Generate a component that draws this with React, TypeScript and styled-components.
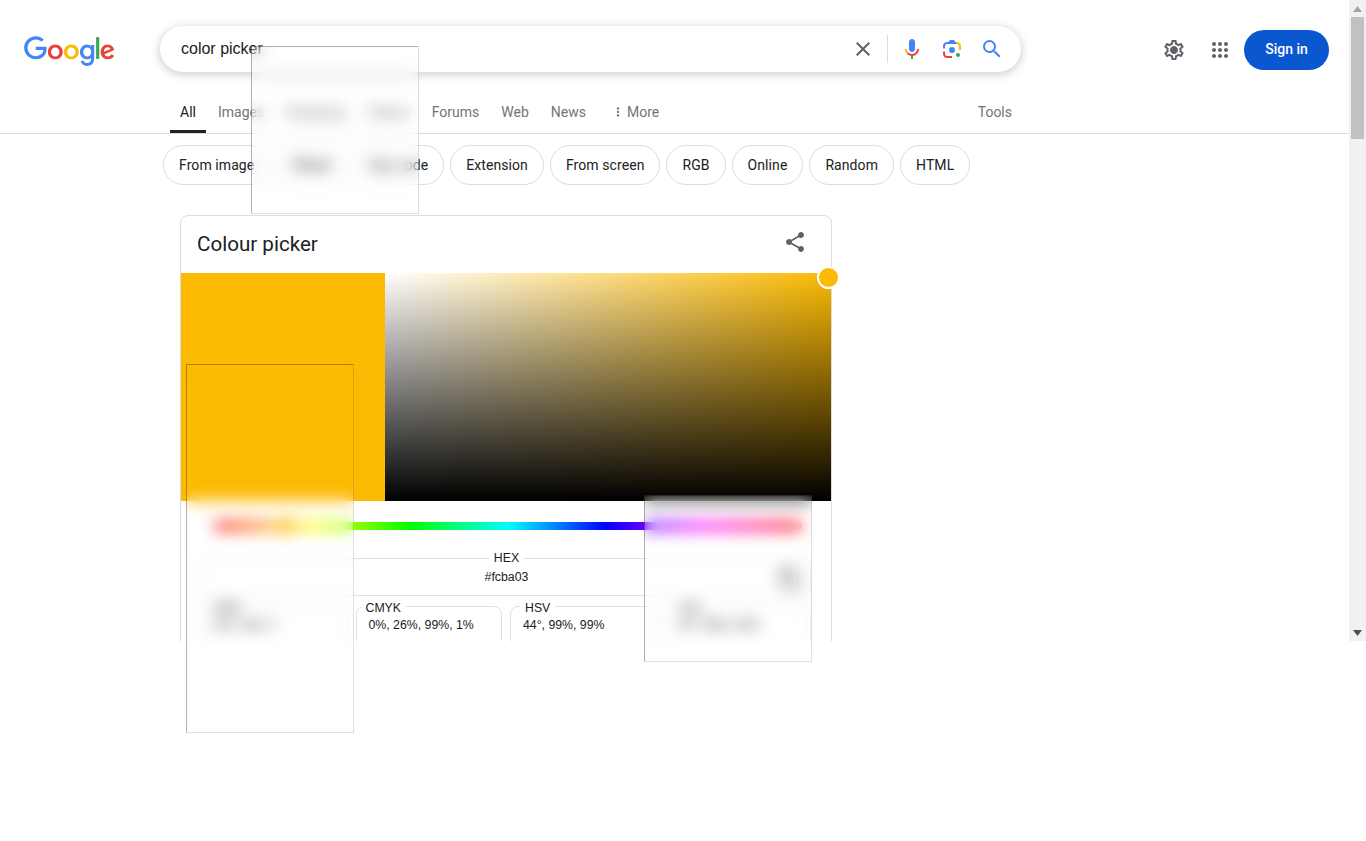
import React from "react";
import styled, { createGlobalStyle } from "styled-components";

const Global = createGlobalStyle`
  html, body { margin: 0; padding: 0; background: #fff; overflow: hidden; }
  body { font-family: "Liberation Sans", Arial, sans-serif; }
  * { box-sizing: border-box; }
`;

const sans = `Roboto, "Liberation Sans", Arial, sans-serif`;
const arial = `"Liberation Sans", Arial, sans-serif`;

const Root = styled.div`position: relative; width: 1366px; height: 841px; overflow: hidden; display: flex; align-items: flex-start;`;
const Page = styled.div`width: 1349px; height: 641px; overflow: hidden; flex: none;`;

const Header = styled.header`height: 92px; display: flex; align-items: flex-start;`;
const LogoWrap = styled.a`display: block; width: 91px; height: 31px; margin: 36px 0 0 24px; flex: none;`;
const SearchBar = styled.div`
  width: 861px; height: 46px; margin: 26px 0 0 45px; flex: none;
  border-radius: 23px; background: #fff; box-shadow: 0 2px 8px 1px rgba(64,60,67,.24);
  display: flex; align-items: center; padding: 0 17px 0 21px;
`;
const Query = styled.div`flex: 1; font: 16px ${arial}; color: #202124; margin-top: -1px;`;
const IconButton = styled.span<{ $w?: number }>`
  width: ${p => p.$w ?? 24}px; height: 24px; display: flex; align-items: center; justify-content: center; flex: none;
`;
const Divider = styled.span`width: 1px; height: 28px; background: #dadce0; margin: 0 12px 0 12px; flex: none;`;
const IconGap = styled.span<{ $w: number }>`width: ${p => p.$w}px; flex: none;`;
const Right = styled.div`display: flex; align-items: center; margin: 30px 0 0 auto; padding-right: 20px; height: 40px;`;
const SignIn = styled.a`
  width: 85px; height: 40px; border-radius: 20px; background: #0b57d0; color: #fff; padding-bottom: 2px;
  display: flex; align-items: center; justify-content: center; font: 500 14px ${sans}; margin-left: 12px;
`;

const TabBar = styled.nav`
  height: 42px; border-bottom: 1px solid #dadce0; padding-left: 170px; display: flex; align-items: stretch;
`;
const TabList = styled.div`width: 852px; display: flex; gap: 2px; align-items: stretch;`;
const Tab = styled.a<{ $active?: boolean; $end?: boolean; $offset?: number }>`
  padding: 0 10px 2px; display: flex; align-items: center; font: 14px ${sans}; height: 41px;
  color: ${p => (p.$active ? "#202124" : "#70757a")};
  margin-left: ${p => (p.$end ? "auto" : `${p.$offset ?? 0}px`)};
  ${p => p.$active && `box-shadow: inset 0 -3px 0 #202124;`}
`;
const Dots = styled.span`display: inline-flex; width: 14px; height: 14px; margin-right: 2px; color: #70757a;`;

const ChipRow = styled.div`display: flex; gap: 6px; padding: 11px 0 0 163px; height: 81px;`;
const Chip = styled.a`
  height: 40px; padding: 0 15px; border: 1px solid #dadce0; border-radius: 20px;
  display: flex; align-items: center; font: 14px ${sans}; letter-spacing: .08px; color: #202124; white-space: nowrap;
`;

const Card = styled.section`
  width: 652px; margin-left: 180px; border: 1px solid #dadce0; border-radius: 8px; height: 600px; position: relative;
`;
const CardHead = styled.div`height: 57px; display: flex; align-items: center; justify-content: space-between; padding: 0 24px 0 16px;`;
const CardTitle = styled.h2`margin: -2px 0 0; font: 400 20.6px ${sans}; color: #202124;`;
const ShareWrap = styled.span`width: 24px; height: 24px; margin-top: -5px; color: #5f6368;`;
const Picker = styled.div`display: flex; height: 228px; width: 100%;`;
const Swatch = styled.div`width: 204px; background: #fcba03; flex: none;`;
const Field = styled.div`
  flex: 1; background: linear-gradient(to top, #000, transparent), linear-gradient(to right, #fff, #fcba03);
`;
const Knob = styled.span<{ $size: number }>`
  position: absolute; width: ${p => p.$size}px; height: ${p => p.$size}px; border-radius: 50%;
  background: #fcba03; border: 2px solid #fff;
`;
const FieldKnob = styled(Knob)`left: 636px; top: 50px;`;
const HueWrap = styled.div`position: relative; margin: 21px 29px 0 33px; height: 8px;`;
const Hue = styled.div`
  height: 8px; border-radius: 4px;
  background: linear-gradient(to right, #f00, #ff0 16.66%, #0f0 33.33%, #0ff 50%, #00f 66.66%, #f0f 83.33%, #f00);
`;
const HueKnob = styled(Knob)`left: 62px; top: -6px;`;
const Outline = styled.fieldset`
  margin: 0; padding: 0; border: 1px solid #e0e0e0; min-width: 0;
`;
const HexLegend = styled.legend`
  font: 12.3px ${arial}; color: #202124; padding: 0 5px 0 5px; margin: 0 auto; line-height: 14px;
`;
const FormatLegend = styled.legend<{ $inset: number }>`
  font: 12.3px ${arial}; color: #202124; padding: 4px 5px 0; margin-left: ${p => p.$inset}px; line-height: 14px;
`;
const HexBox = styled(Outline)`
  margin: 21px 20px 0 21px; height: 45px; border-radius: 8px; text-align: center; position: relative;
`;
const HexValue = styled.div`font: 12.3px ${arial}; color: #202124; line-height: 14px; margin-top: 5px;`;
const CopyIcon = styled.span`position: absolute; right: 8px; top: 2px; width: 24px; height: 24px; color: #5f6368;`;
const FormatGrid = styled.div`
  display: grid; grid-template-columns: repeat(4, 146px); column-gap: 8.5px; margin: 1px 0 0 20px;
`;
const FormatBox = styled(Outline)`height: 62px; border-radius: 8px;`;
const FormatValue = styled.div<{ $inset: number }>`
  font: 12.3px ${arial}; color: #202124; line-height: 14px; padding-left: ${p => p.$inset}px; margin-top: 3px; white-space: nowrap;
`;

const Frost = styled.div`
  position: absolute; width: 168px; backdrop-filter: blur(8px);
  border: 1px solid; border-color: rgba(0,0,0,.3) rgba(0,0,0,.12) rgba(0,0,0,.12) rgba(0,0,0,.3);
`;
const FrostTabs = styled(Frost)`left: 251px; top: 46px; height: 168px;`;
const FrostLeft = styled(Frost)`left: 186px; top: 364px; height: 369px;`;
const FrostRight = styled(Frost)`left: 644px; top: 495px; height: 167px;`;

const Scrollbar = styled.div`
  width: 17px; height: 641px; background: #f1f1f1; flex: none; display: flex; flex-direction: column; align-items: center; justify-content: space-between;
`;
const ScrollTop = styled.div`display: flex; flex-direction: column; align-items: center; width: 100%;`;
const ArrowBox = styled.span`height: 17px; width: 100%; display: flex; align-items: center; justify-content: center;`;
const Thumb = styled.div`width: 13px; height: 122px; background: #c1c1c1;`;

const Icon = ({ d, color, size = 24 }: { d: string; color: string; size?: number }) => (
  <svg width={size} height={size} viewBox="0 0 24 24" fill={color}><path d={d} /></svg>
);

const GoogleLogo = () => (
  <svg width="91" height="31" viewBox="0 0 272 92">
    <path fill="#EA4335" d="M115.75 47.18c0 12.77-9.99 22.18-22.25 22.18s-22.25-9.41-22.25-22.18C71.25 34.32 81.24 25 93.5 25s22.25 9.32 22.25 22.18zm-9.74 0c0-7.98-5.79-13.44-12.51-13.44S80.99 39.2 80.99 47.18c0 7.9 5.79 13.44 12.51 13.44s12.51-5.55 12.51-13.44z" />
    <path fill="#FBBC05" d="M163.75 47.18c0 12.77-9.99 22.18-22.25 22.18s-22.25-9.41-22.25-22.18c0-12.85 9.99-22.18 22.25-22.18s22.25 9.32 22.25 22.18zm-9.74 0c0-7.98-5.79-13.44-12.51-13.44s-12.51 5.46-12.51 13.44c0 7.9 5.79 13.44 12.51 13.44s12.51-5.55 12.51-13.44z" />
    <path fill="#4285F4" d="M209.75 26.34v39.82c0 16.38-9.66 23.07-21.08 23.07-10.75 0-17.22-7.19-19.66-13.07l8.48-3.53c1.51 3.61 5.21 7.87 11.17 7.87 7.31 0 11.84-4.51 11.84-13v-3.19h-.34c-2.18 2.69-6.38 5.04-11.68 5.04-11.09 0-21.25-9.66-21.25-22.09 0-12.52 10.16-22.26 21.25-22.26 5.29 0 9.49 2.35 11.68 4.96h.34v-3.61h9.25zm-8.56 20.92c0-7.81-5.21-13.52-11.84-13.52-6.72 0-12.35 5.71-12.35 13.52 0 7.73 5.63 13.36 12.35 13.36 6.63 0 11.84-5.63 11.84-13.36z" />
    <path fill="#34A853" d="M225 3v65h-9.5V3h9.5z" />
    <path fill="#EA4335" d="M262.02 54.48l7.56 5.04c-2.44 3.61-8.32 9.83-18.48 9.83-12.6 0-22.01-9.74-22.01-22.18 0-13.19 9.49-22.18 20.92-22.18 11.51 0 17.14 9.16 18.98 14.11l1.01 2.52-29.65 12.28c2.27 4.45 5.8 6.72 10.75 6.72 4.96 0 8.4-2.44 10.92-6.14zm-23.27-7.98l19.82-8.23c-1.09-2.77-4.37-4.7-8.23-4.7-4.95 0-11.84 4.37-11.59 12.93z" />
    <path fill="#4285F4" d="M35.29 41.41V32H67c.31 1.64.47 3.58.47 5.68 0 7.06-1.93 15.79-8.15 22.01-6.05 6.3-13.78 9.66-24.02 9.66C16.32 69.35.36 53.89.36 34.91.36 15.93 16.32.47 35.3.47c10.5 0 17.98 4.12 23.6 9.49l-6.64 6.64c-4.03-3.78-9.49-6.72-16.97-6.72-13.86 0-24.7 11.17-24.7 25.03 0 13.86 10.84 25.03 24.7 25.03 8.99 0 14.11-3.61 17.39-6.89 2.66-2.66 4.41-6.46 5.1-11.65l-22.49.01z" />
  </svg>
);

const MicIcon = () => (
  <svg width="24" height="24" viewBox="0 0 24 24">
    <path fill="#4285f4" d="m12 15c1.66 0 3-1.31 3-2.97v-7.02c0-1.66-1.34-3.01-3-3.01s-3 1.34-3 3.01v7.02c0 1.66 1.34 2.97 3 2.97z" />
    <path fill="#34a853" d="m11 18.08h2v3.92h-2z" />
    <path fill="#fbbc04" d="m7.05 16.87c-1.27-1.33-2.05-2.83-2.05-4.87h2c0 1.45 0.56 2.42 1.47 3.38v0.32l-1.15 1.18z" />
    <path fill="#ea4335" d="m12 16.93a4.97 5.25 0 0 1 -3.54 -1.55l-1.41 1.49c1.26 1.34 3.02 2.13 4.95 2.13 3.87 0 6.99-2.92 6.99-7h-1.99c0 2.92-2.24 4.93-5 4.93z" />
  </svg>
);

const LensIcon = () => (
  <svg width="24" height="24" viewBox="0 0 192 192">
    <circle fill="#34a853" cx="144.07" cy="144" r="16" />
    <circle fill="#4285f4" cx="96.07" cy="104" r="24" />
    <path fill="#ea4335" d="M24,135.2c0,18.11,14.69,32.8,32.8,32.8H96v-16l-40.1-0.1c-8.8,0-15.9-8.19-15.9-17.9v-18H24V135.2z" />
    <path fill="#fbbc04" d="M168,72.8c0-18.11-14.69-32.8-32.8-32.8H116l20,16c8.8,0,16,8.29,16,18v30h16V72.8z" />
    <path fill="#4285f4" d="M112,24l-32,0L68,40H56.8C38.69,40,24,54.69,24,72.8V92h16V74c0-9.71,7.2-18,16-18h80L112,24z" />
  </svg>
);

const PATHS = {
  close: "M19 6.41L17.59 5 12 10.59 6.41 5 5 6.41 10.59 12 5 17.59 6.41 19 12 13.41 17.59 19 19 17.59 13.41 12z",
  search: "M15.5 14h-.79l-.28-.27A6.471 6.471 0 0 0 16 9.5 6.5 6.5 0 1 0 9.5 16c1.61 0 3.09-.59 4.23-1.57l.27.28v.79l5 4.99L20.49 19l-4.99-5zm-6 0C7.01 14 5 11.99 5 9.5S7.01 5 9.5 5 14 7.01 14 9.5 11.99 14 9.5 14z",
  gear: "M19.43 12.98c.04-.32.07-.64.07-.98 0-.34-.03-.66-.07-.98l2.11-1.65c.19-.15.24-.42.12-.64l-2-3.46c-.09-.16-.26-.25-.44-.25-.06 0-.12.01-.17.03l-2.49 1c-.52-.4-1.08-.73-1.69-.98l-.38-2.65C14.46 2.18 14.25 2 14 2h-4c-.25 0-.46.18-.49.42l-.38 2.65c-.61.25-1.17.59-1.69.98l-2.49-1c-.06-.02-.12-.03-.18-.03-.17 0-.34.09-.43.25l-2 3.46c-.13.22-.07.49.12.64l2.11 1.65c-.04.32-.07.65-.07.98 0 .33.03.66.07.98l-2.11 1.65c-.19.15-.24.42-.12.64l2 3.46c.09.16.26.25.44.25.06 0 .12-.01.17-.03l2.49-1c.52.4 1.08.73 1.69.98l.38 2.65c.03.24.24.42.49.42h4c.25 0 .46-.18.49-.42l.38-2.65c.61-.25 1.17-.59 1.69-.98l2.49 1c.06.02.12.03.18.03.17 0 .34-.09.43-.25l2-3.46c.12-.22.07-.49-.12-.64l-2.11-1.65zm-1.98-1.71c.04.31.05.52.05.73 0 .21-.02.43-.05.73l-.14 1.13.89.7 1.08.84-.7 1.21-1.27-.51-1.04-.42-.9.68c-.43.32-.84.56-1.25.73l-1.06.43-.16 1.13-.2 1.35h-1.4l-.19-1.35-.16-1.13-1.06-.43c-.43-.18-.83-.41-1.23-.71l-.91-.7-1.06.43-1.27.51-.7-1.21 1.08-.84.89-.7-.14-1.13c-.03-.31-.05-.54-.05-.74s.02-.43.05-.73l.14-1.13-.89-.7-1.08-.84.7-1.21 1.27.51 1.04.42.9-.68c.43-.32.84-.56 1.25-.73l1.06-.43.16-1.13.2-1.35h1.39l.19 1.35.16 1.13 1.06.43c.43.18.83.41 1.23.71l.91.7 1.06-.43 1.27-.51.7 1.21-1.07.85-.89.7.14 1.13zM12 8c-2.21 0-4 1.79-4 4s1.79 4 4 4 4-1.79 4-4-1.79-4-4-4z",
  apps: "M6,8c1.1,0 2,-0.9 2,-2s-0.9,-2 -2,-2 -2,0.9 -2,2 0.9,2 2,2zM12,20c1.1,0 2,-0.9 2,-2s-0.9,-2 -2,-2 -2,0.9 -2,2 0.9,2 2,2zM6,20c1.1,0 2,-0.9 2,-2s-0.9,-2 -2,-2 -2,0.9 -2,2 0.9,2 2,2zM6,14c1.1,0 2,-0.9 2,-2s-0.9,-2 -2,-2 -2,0.9 -2,2 0.9,2 2,2zM12,14c1.1,0 2,-0.9 2,-2s-0.9,-2 -2,-2 -2,0.9 -2,2 0.9,2 2,2zM16,6c0,1.1 0.9,2 2,2s2,-0.9 2,-2 -0.9,-2 -2,-2 -2,0.9 -2,2zM12,8c1.1,0 2,-0.9 2,-2s-0.9,-2 -2,-2 -2,0.9 -2,2 0.9,2 2,2zM18,14c1.1,0 2,-0.9 2,-2s-0.9,-2 -2,-2 -2,0.9 -2,2 0.9,2 2,2zM18,20c1.1,0 2,-0.9 2,-2s-0.9,-2 -2,-2 -2,0.9 -2,2 0.9,2 2,2z",
  share: "M18 16.08c-.76 0-1.44.3-1.96.77L8.91 12.7c.05-.23.09-.46.09-.7s-.04-.47-.09-.7l7.05-4.11c.54.5 1.25.81 2.04.81 1.66 0 3-1.34 3-3s-1.34-3-3-3-3 1.34-3 3c0 .24.04.47.09.7L8.04 9.81C7.5 9.31 6.79 9 6 9c-1.66 0-3 1.34-3 3s1.34 3 3 3c.79 0 1.5-.31 2.04-.81l7.12 4.16c-.05.21-.08.43-.08.65 0 1.61 1.31 2.92 2.92 2.92 1.61 0 2.92-1.31 2.92-2.92s-1.31-2.92-2.92-2.92z",
  copy: "M16 1H4c-1.1 0-2 .9-2 2v14h2V3h12V1zm3 4H8c-1.1 0-2 .9-2 2v14c0 1.1.9 2 2 2h11c1.1 0 2-.9 2-2V7c0-1.1-.9-2-2-2zm0 16H8V7h11v14z",
  more: "M12 8c1.1 0 2-.9 2-2s-.9-2-2-2-2 .9-2 2 .9 2 2 2zm0 2c-1.1 0-2 .9-2 2s.9 2 2 2 2-.9 2-2-.9-2-2-2zm0 6c-1.1 0-2 .9-2 2s.9 2 2 2 2-.9 2-2-.9-2-2-2z",
};

const TABS = ["Images", "Shopping", "Videos", "Forums", "Web", "News"];
const CHIPS = ["From image", "Wheel", "Hex code", "Extension", "From screen", "RGB", "Online", "Random", "HTML"];
const FORMATS = [
  { name: "RGB", value: "252, 186, 3", legend: 7, inset: 11 },
  { name: "CMYK", value: "0%, 26%, 99%, 1%", legend: 4, inset: 12 },
  { name: "HSV", value: "44°, 99%, 99%", legend: 9, inset: 12 },
  { name: "HSL", value: "44°, 98%, 50%", legend: 9, inset: 13 },
];

export default function App() {
  return (
    <Root>
      <Global />
      <Page>
        <Header>
          <LogoWrap><GoogleLogo /></LogoWrap>
          <SearchBar>
            <Query>color picker</Query>
            <IconButton><Icon d={PATHS.close} color="#5f6368" /></IconButton>
            <Divider />
            <IconButton><MicIcon /></IconButton>
            <IconGap $w={16} />
            <IconButton><LensIcon /></IconButton>
            <IconGap $w={16} />
            <IconButton><Icon d={PATHS.search} color="#4285f4" /></IconButton>
          </SearchBar>
          <Right>
            <IconButton><Icon d={PATHS.gear} color="#5f6368" /></IconButton>
            <IconGap $w={22} />
            <IconButton><Icon d={PATHS.apps} color="#5f6368" /></IconButton>
            <SignIn>Sign in</SignIn>
          </Right>
        </Header>
        <TabBar>
          <TabList>
            <Tab $active>All</Tab>
            {TABS.map(t => <Tab key={t}>{t}</Tab>)}
            <Tab $offset={3}><Dots><Icon d={PATHS.more} color="#70757a" size={14} /></Dots>More</Tab>
            <Tab $end>Tools</Tab>
          </TabList>
        </TabBar>
        <ChipRow>
          {CHIPS.map(c => <Chip key={c}>{c}</Chip>)}
        </ChipRow>
        <Card>
          <CardHead>
            <CardTitle>Colour picker</CardTitle>
            <ShareWrap><Icon d={PATHS.share} color="#5f6368" /></ShareWrap>
          </CardHead>
          <Picker>
            <Swatch />
            <Field />
          </Picker>
          <FieldKnob $size={23} />
          <HueWrap>
            <Hue />
            <HueKnob $size={20} />
          </HueWrap>
          <HexBox>
            <HexLegend>HEX</HexLegend>
            <HexValue>#fcba03</HexValue>
            <CopyIcon><Icon d={PATHS.copy} color="#5f6368" /></CopyIcon>
          </HexBox>
          <FormatGrid>
            {FORMATS.map(f => (
              <FormatBox key={f.name}>
                <FormatLegend $inset={f.legend}>{f.name}</FormatLegend>
                <FormatValue $inset={f.inset}>{f.value}</FormatValue>
              </FormatBox>
            ))}
          </FormatGrid>
        </Card>
      </Page>
      <Scrollbar>
        <ScrollTop>
          <ArrowBox>
            <svg width="9" height="6" viewBox="0 0 9 6"><path d="M4.5 0L9 6H0z" fill="#a3a3a3" /></svg>
          </ArrowBox>
          <Thumb />
        </ScrollTop>
        <ArrowBox>
          <svg width="9" height="6" viewBox="0 0 9 6"><path d="M0 0h9L4.5 6z" fill="#505050" /></svg>
        </ArrowBox>
      </Scrollbar>
      <FrostTabs />
      <FrostLeft />
      <FrostRight />
    </Root>
  );
}
